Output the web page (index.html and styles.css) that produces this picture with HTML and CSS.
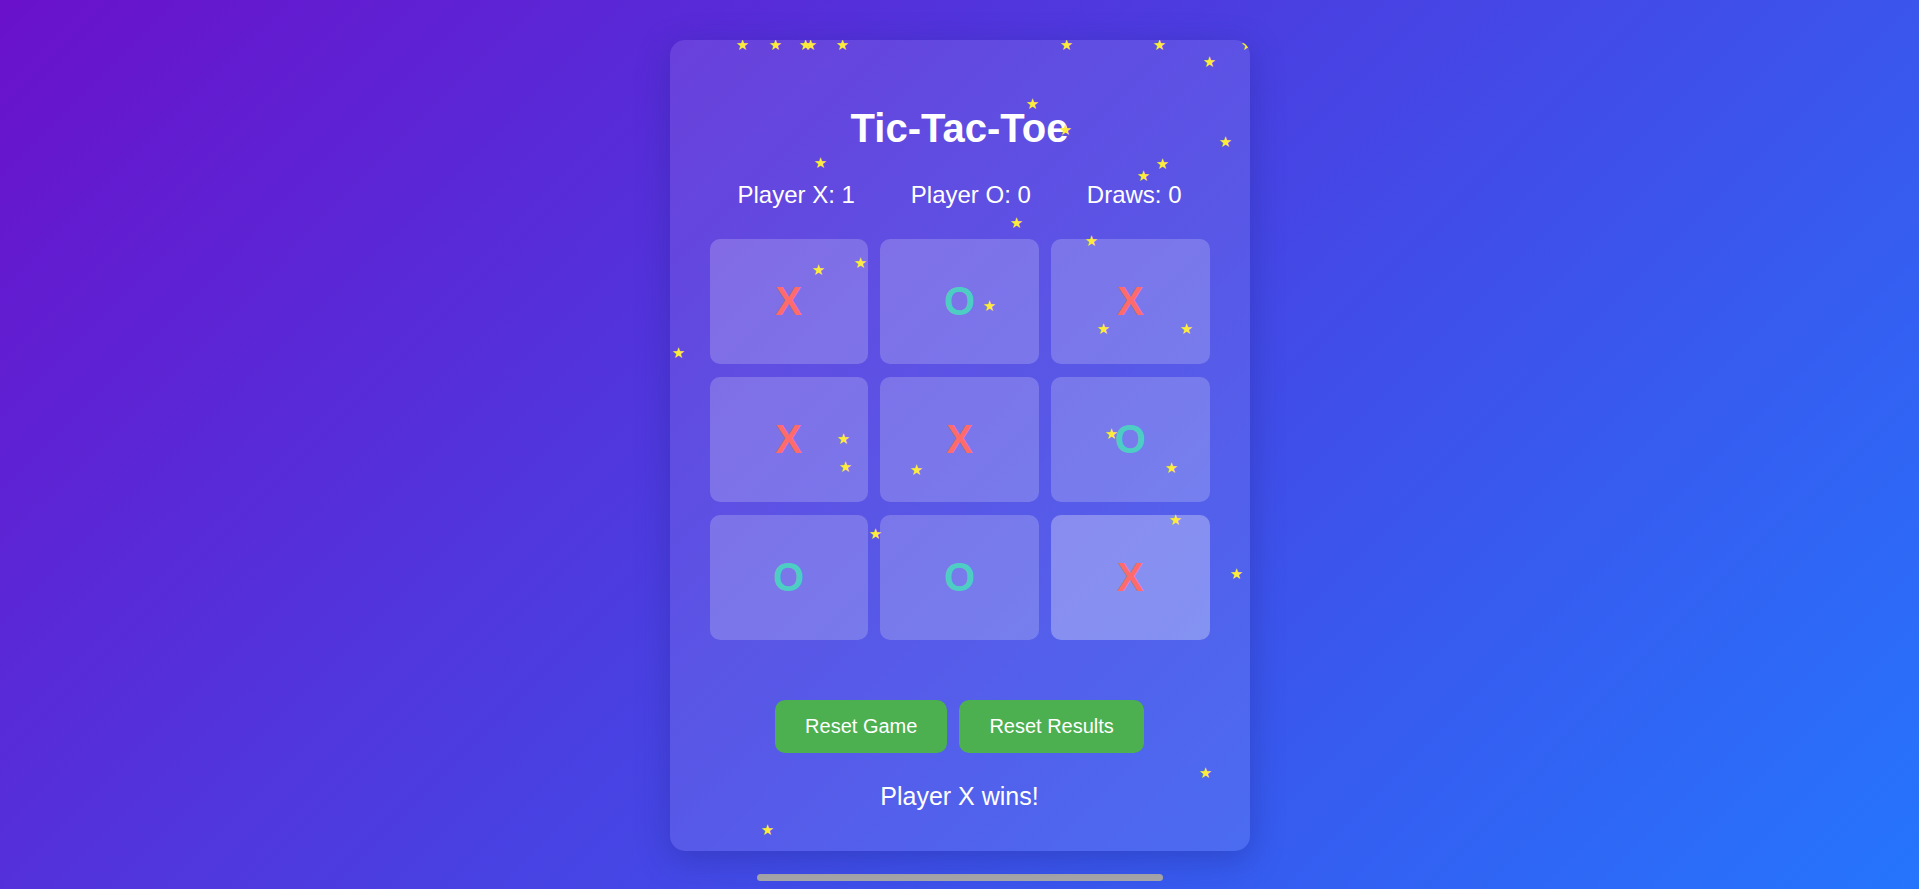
FILE: index.html
```html
<!DOCTYPE html>
<html lang="en">
<head>
<meta charset="utf-8">
<title>Tic-Tac-Toe</title>
<link rel="stylesheet" href="styles.css">
</head>
<body>
  <main class="card">
    <h1 class="title">Tic-Tac-Toe</h1>
    <div class="scores">
      <span class="score">Player X: 1</span>
      <span class="score">Player O: 0</span>
      <span class="score">Draws: 0</span>
    </div>
    <div class="board">
      <div class="cell x">X</div>
      <div class="cell o">O</div>
      <div class="cell x">X</div>
      <div class="cell x">X</div>
      <div class="cell x">X</div>
      <div class="cell o">O</div>
      <div class="cell o">O</div>
      <div class="cell o">O</div>
      <div class="cell x is-hovered">X</div>
    </div>
    <div class="actions">
      <button class="btn" type="button">Reset Game</button>
      <button class="btn" type="button">Reset Results</button>
    </div>
    <p class="status">Player X wins!</p>

    <div class="confetti" aria-hidden="true">
      <span class="star" style="left:73px;top:5px">★</span>
      <span class="star" style="left:106px;top:5px">★</span>
      <span class="star" style="left:136px;top:5px">★</span>
      <span class="star" style="left:141px;top:5px">★</span>
      <span class="star" style="left:173px;top:5px">★</span>
      <span class="star" style="left:397px;top:5px">★</span>
      <span class="star" style="left:490px;top:5px">★</span>
      <span class="star" style="left:578px;top:5px">★</span>
      <span class="star" style="left:540px;top:22px">★</span>
      <span class="star" style="left:363px;top:64px">★</span>
      <span class="star" style="left:396px;top:90px">★</span>
      <span class="star" style="left:556px;top:102px">★</span>
      <span class="star" style="left:151px;top:123px">★</span>
      <span class="star" style="left:493px;top:124px">★</span>
      <span class="star" style="left:474px;top:136px">★</span>
      <span class="star" style="left:347px;top:183px">★</span>
      <span class="star" style="left:422px;top:201px">★</span>
      <span class="star" style="left:191px;top:223px">★</span>
      <span class="star" style="left:149px;top:230px">★</span>
      <span class="star" style="left:320px;top:266px">★</span>
      <span class="star" style="left:9px;top:313px">★</span>
      <span class="star" style="left:434px;top:289px">★</span>
      <span class="star" style="left:517px;top:289px">★</span>
      <span class="star" style="left:174px;top:399px">★</span>
      <span class="star" style="left:176px;top:427px">★</span>
      <span class="star" style="left:247px;top:430px">★</span>
      <span class="star" style="left:442px;top:394px">★</span>
      <span class="star" style="left:502px;top:428px">★</span>
      <span class="star" style="left:206px;top:494px">★</span>
      <span class="star" style="left:506px;top:480px">★</span>
      <span class="star" style="left:567px;top:534px">★</span>
      <span class="star" style="left:536px;top:733px">★</span>
      <span class="star" style="left:98px;top:790px">★</span>
    </div>
  </main>
  <div class="scroll-thumb"></div>
</body>
</html>
```
FILE: styles.css
```css
* {
  box-sizing: border-box;
}

html {
  height: 100%;
}

body {
  margin: 0;
  min-height: 100vh;
  padding-top: 40px;
  background: linear-gradient(135deg, #6a11cb 0%, #2575fc 100%);
  font-family: "Liberation Sans", Arial, sans-serif;
  color: #fff;
  display: flex;
  flex-direction: column;
  align-items: center;
  gap: 23px;
}

.card {
  position: relative;
  overflow: hidden;
  width: 580px;
  padding: 40px;
  border-radius: 15px;
  background: rgba(255, 255, 255, 0.1);
  box-shadow: 0 8px 32px rgba(31, 38, 135, 0.37);
  text-align: center;
}

.title {
  margin: 26px 0 30px;
  font-size: 40px;
  font-weight: bold;
  line-height: normal;
}

.scores {
  display: flex;
  justify-content: space-around;
  font-size: 24px;
  margin-bottom: 30px;
}

.board {
  display: grid;
  grid-template-columns: repeat(3, 1fr);
  gap: 12.8px;
  margin-bottom: 60px;
}

.cell {
  height: 125px;
  border-radius: 10px;
  background: rgba(255, 255, 255, 0.2);
  display: flex;
  align-items: center;
  justify-content: center;
  font-size: 40px;
  font-weight: bold;
}

.cell.is-hovered {
  background: rgba(255, 255, 255, 0.3);
}

.cell.x {
  color: #ff6b6b;
}

.cell.o {
  color: #4ecdc4;
}

.actions {
  display: flex;
  justify-content: center;
  gap: 12px;
  margin-bottom: 29.5px;
}

.btn {
  border: none;
  border-radius: 10px;
  padding: 15px 30px;
  background: #4caf50;
  color: #fff;
  font-family: inherit;
  font-size: 20px;
  line-height: normal;
  cursor: pointer;
}

.status {
  margin: 0;
  font-size: 25px;
  line-height: normal;
}

.confetti {
  position: absolute;
  inset: 0;
  pointer-events: none;
}

.star {
  position: absolute;
  transform: translate(-50%, -50%);
  font-family: "DejaVu Sans", sans-serif;
  font-size: 15px;
  line-height: 1;
  color: #ffeb3b;
}

.scroll-thumb {
  width: 406px;
  height: 7px;
  border-radius: 4px;
  background: #a9a9a9;
}
```
